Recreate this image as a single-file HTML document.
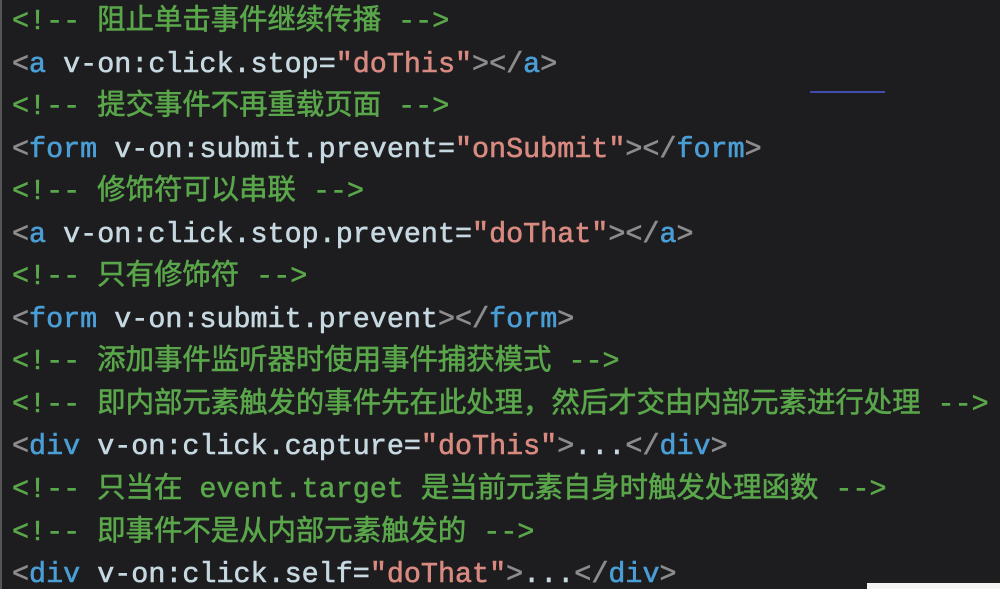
<!DOCTYPE html>
<html><head><meta charset="utf-8"><style>
html,body{margin:0;padding:0;background:#1d1c1f;width:1000px;height:589px;overflow:hidden}
body{position:relative}
.code{position:absolute;left:12px;top:1px;font-family:"Liberation Mono","Noto Sans CJK SC",monospace;font-size:28.4px;line-height:42.55px;white-space:pre;color:#c6d8e0;-webkit-text-stroke:0.6px currentColor}
.c{color:#5aa64a}
.t{color:#4a9ed6}
.p{color:#8c8c8c}
.s{color:#d98a80}
.edge{position:absolute;left:0;top:0;width:2px;height:589px;background:#555}
.wb{position:absolute;left:867px;top:583px;width:133px;height:6px;background:#f2f2f2}
.blue{position:absolute;left:810px;top:91px;width:75px;height:2px;background:#4a5ad0;opacity:.8}
</style></head><body>
<div class="edge"></div>
<div class="blue"></div>
<div class="code"><span class="c">&lt;!-- 阻止单击事件继续传播 --&gt;</span>
<span class="p">&lt;</span><span class="t">a</span> v-on:click.stop=<span class="s">"doThis"</span><span class="p">&gt;&lt;/</span><span class="t">a</span><span class="p">&gt;</span>
<span class="c">&lt;!-- 提交事件不再重载页面 --&gt;</span>
<span class="p">&lt;</span><span class="t">form</span> v-on:submit.prevent=<span class="s">"onSubmit"</span><span class="p">&gt;&lt;/</span><span class="t">form</span><span class="p">&gt;</span>
<span class="c">&lt;!-- 修饰符可以串联 --&gt;</span>
<span class="p">&lt;</span><span class="t">a</span> v-on:click.stop.prevent=<span class="s">"doThat"</span><span class="p">&gt;&lt;/</span><span class="t">a</span><span class="p">&gt;</span>
<span class="c">&lt;!-- 只有修饰符 --&gt;</span>
<span class="p">&lt;</span><span class="t">form</span> v-on:submit.prevent<span class="p">&gt;&lt;/</span><span class="t">form</span><span class="p">&gt;</span>
<span class="c">&lt;!-- 添加事件监听器时使用事件捕获模式 --&gt;</span>
<span class="c">&lt;!-- 即内部元素触发的事件先在此处理，然后才交由内部元素进行处理 --&gt;</span>
<span class="p">&lt;</span><span class="t">div</span> v-on:click.capture=<span class="s">"doThis"</span><span class="p">&gt;</span>...<span class="p">&lt;/</span><span class="t">div</span><span class="p">&gt;</span>
<span class="c">&lt;!-- 只当在 event.target 是当前元素自身时触发处理函数 --&gt;</span>
<span class="c">&lt;!-- 即事件不是从内部元素触发的 --&gt;</span>
<span class="p">&lt;</span><span class="t">div</span> v-on:click.self=<span class="s">"doThat"</span><span class="p">&gt;</span>...<span class="p">&lt;/</span><span class="t">div</span><span class="p">&gt;</span></div>
<div class="wb"></div>
</body></html>
